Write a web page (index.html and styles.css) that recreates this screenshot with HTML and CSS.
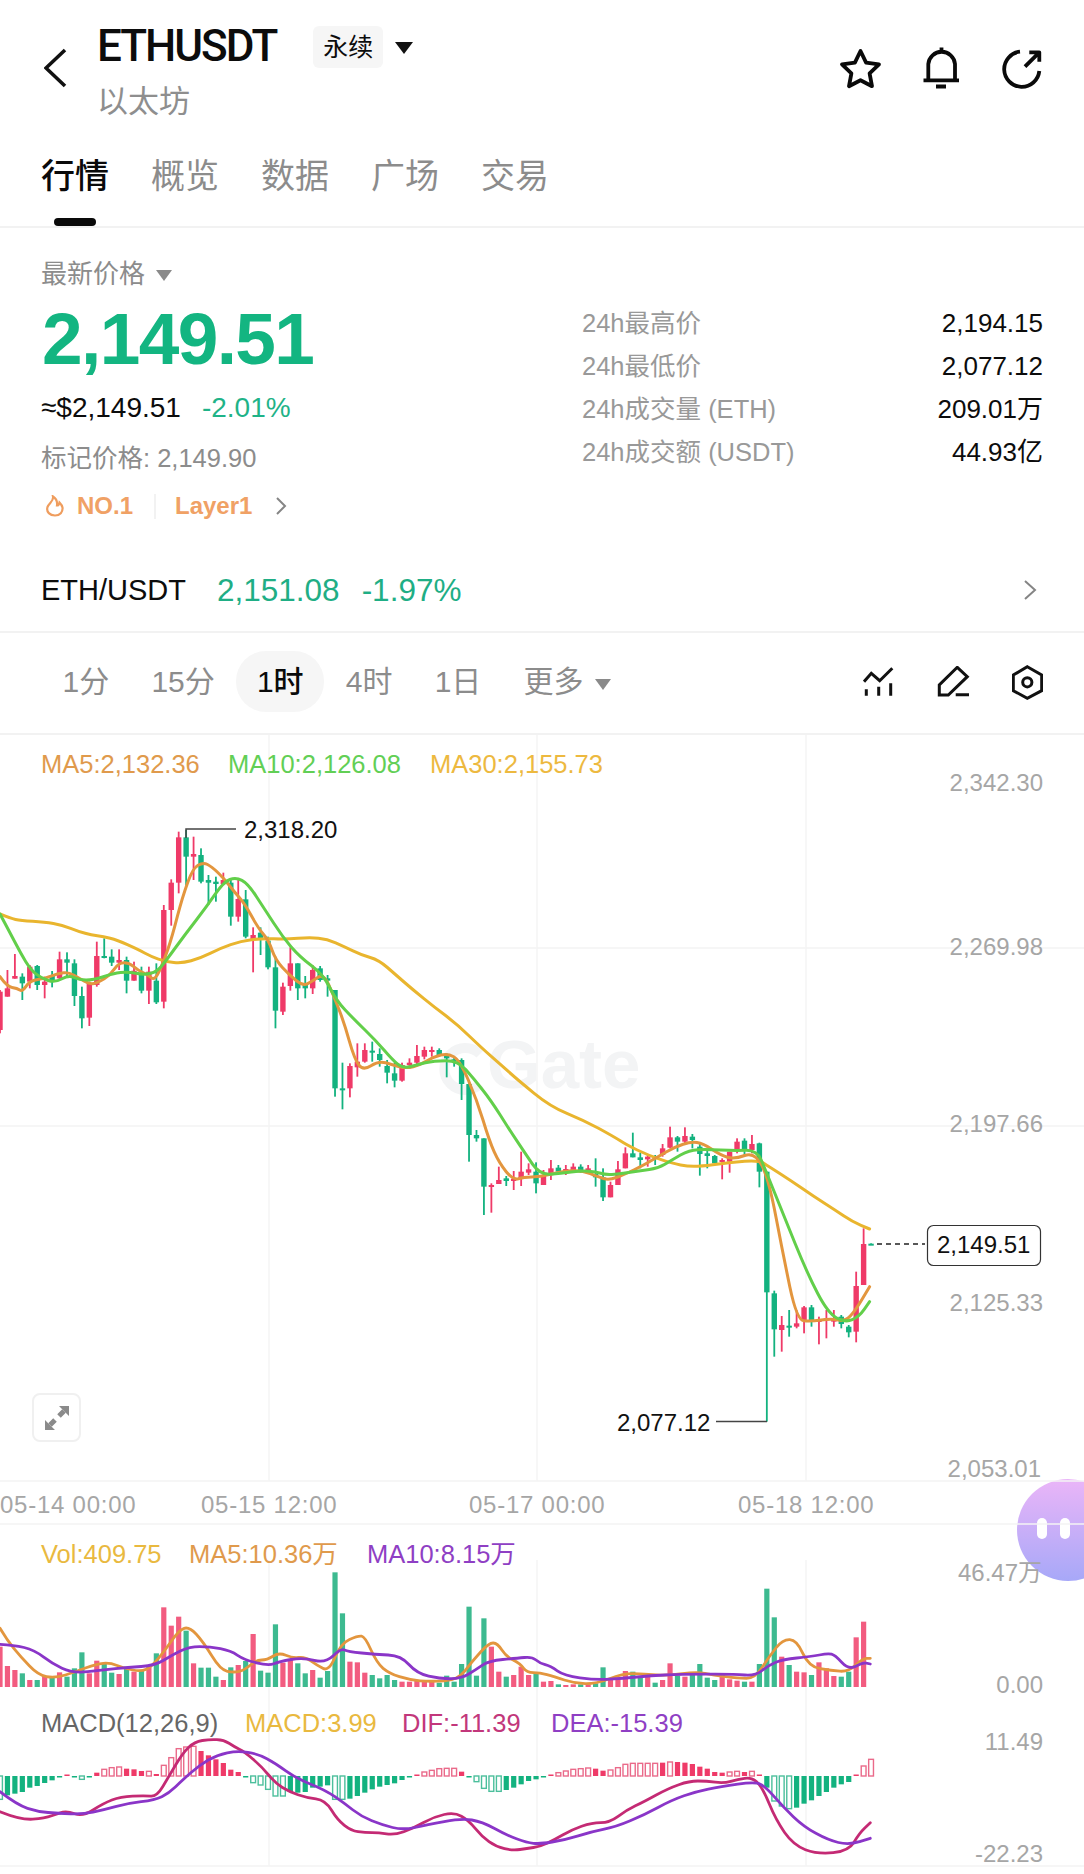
FILE: index.html
```html
<!DOCTYPE html>
<html lang="zh-CN">
<head>
    <meta charset="UTF-8">
    <meta name="viewport" content="width=device-width, initial-scale=1.0">
    <title>ETHUSDT 永续</title>
    <link rel="stylesheet" href="styles.css">
</head>
<body>
<div class="page">

    <header class="topbar">
        <svg class="back-icon" width="24" height="40" viewBox="0 0 24 40"><path d="M21 2 L2 20 L21 38"/></svg>
        <div class="title-block">
            <div class="title-row">
                <span class="symbol">ETHUSDT</span>
                <span class="contract-tag">永续</span>
                <span class="caret caret-dark"></span>
            </div>
            <div class="subtitle">以太坊</div>
        </div>
        <div class="top-actions">
            <svg width="44" height="44" viewBox="0 0 44 44"><path class="line-icon" d="M21.5 4 L27.1 15.6 L40 17.4 L30.6 26.4 L33 39.2 L21.5 33.2 L10 39.2 L12.4 26.4 L3 17.4 L15.9 15.6 Z"/></svg>
            <svg width="37" height="42" viewBox="0 0 37 42"><path class="line-icon" d="M5.3 33 V17 A13.4 13.4 0 0 1 32 17 V33 M0.5 33.3 H36 M18.5 0.5 V4 M13 39.5 H23"/></svg>
            <svg class="share-icon" width="40" height="42" viewBox="0 0 40 42"><path class="line-icon" d="M18 2.7 A17.6 17.6 0 1 0 37.3 22 M23 17.7 L36.3 4.3 M27.3 3.3 H37.3 V12.7"/></svg>
        </div>
    </header>

    <nav class="tabs">
        <div class="tab active">行情<i class="tab-bar"></i></div>
        <div class="tab">概览<i class="tab-bar"></i></div>
        <div class="tab">数据<i class="tab-bar"></i></div>
        <div class="tab">广场<i class="tab-bar"></i></div>
        <div class="tab">交易<i class="tab-bar"></i></div>
    </nav>

    <section class="quote">
        <div class="quote-left">
            <div class="latest-label">最新价格<span class="caret caret-gray"></span></div>
            <div class="big-price">2,149.51</div>
            <div class="usd-line">≈$2,149.51<span class="usd-change">-2.01%</span></div>
            <div class="mark-price">标记价格: 2,149.90</div>
            <div class="tag-line">
                <svg class="flame" width="20" height="22" viewBox="0 0 20 22"><path d="M8 1.5 C9 6 4 8 2.5 12 C1 17 5 20.5 10 20.5 C15 20.5 18 17 17.5 12.5 C17 10 15.5 8.5 14.5 7.5 C14 10 13 10.5 12 10.5 C12.5 7 11 3.5 8 1.5 Z"/></svg>
                <span class="rank">NO.1</span>
                <span class="tag-sep"></span>
                <span class="rank">Layer1</span>
                <svg class="chev chev-tag" width="12" height="18" viewBox="0 0 12 18"><path d="M2 1 L10 9 L2 17"/></svg>
            </div>
        </div>
        <div class="stats">
            <div class="stat-row"><span class="stat-name">24h最高价</span><span class="stat-value">2,194.15</span></div>
            <div class="stat-row"><span class="stat-name">24h最低价</span><span class="stat-value">2,077.12</span></div>
            <div class="stat-row"><span class="stat-name">24h成交量 (ETH)</span><span class="stat-value">209.01万</span></div>
            <div class="stat-row"><span class="stat-name">24h成交额 (USDT)</span><span class="stat-value">44.93亿</span></div>
        </div>
    </section>

    <section class="spot-row">
        <span class="spot-name">ETH/USDT</span>
        <span class="spot-price">2,151.08</span>
        <span class="spot-change">-1.97%</span>
        <svg class="chev chev-spot" width="14" height="20" viewBox="0 0 14 20"><path d="M2 1 L12 10 L2 19"/></svg>
    </section>

    <section class="periods">
        <span class="period">1分</span>
        <span class="period">15分</span>
        <span class="period active">1时</span>
        <span class="period">4时</span>
        <span class="period">1日</span>
        <span class="period">更多<span class="caret caret-gray caret-more"></span></span>
        <div class="chart-tools">
            <svg width="32" height="32" viewBox="0 0 32 32"><path class="tool-icon" d="M1 15.7 L8.3 7.3 L16.7 14.7 L29.3 2.3 M3.3 23.3 V29.7 M15.7 20.7 V29.7 M27.7 17.3 V29.7"/></svg>
            <svg width="33" height="32" viewBox="0 0 33 32"><path class="tool-icon" d="M20.3 1.3 L30.3 10.7 L11.3 29 H2.3 V19 Z M18.7 28.7 H32"/></svg>
            <svg width="31" height="35" viewBox="0 0 31 35"><path class="tool-icon" d="M15.3 1.7 L29.7 10 V25.7 L15.3 33.3 L1.3 25.7 V10 Z"/><circle class="tool-icon" cx="15.3" cy="17.3" r="4.6"/></svg>
        </div>
    </section>

    <section class="chart-wrap">
        <div class="float-bot"><i></i><i></i></div>
        <svg id="chart" class="chart" width="1084" height="1139" viewBox="0 735 1084 1139">
            <g class="grid">
                <path d="M0 948 H1084 M0 1126 H1084 M0 1481 H1084 M0 1524 H1084 M0 1866 H1084"/>
                <path d="M269 735 V1481 M537 735 V1481 M806 735 V1481 M269 1560 V1866 M537 1560 V1866 M806 1560 V1866"/>
            </g>
            <g class="watermark">
                <path d="M480 1054 A21 21 0 1 0 480 1084"/>
                <text x="487" y="1088">Gate</text>
            </g>
            <g id="series"></g>

            <text class="legend ma5" x="41" y="773">MA5:2,132.36</text>
            <text class="legend ma10" x="228" y="773">MA10:2,126.08</text>
            <text class="legend ma30" x="430" y="773">MA30:2,155.73</text>

            <text class="axis" x="1043" y="791">2,342.30</text>
            <text class="axis" x="1043" y="955">2,269.98</text>
            <text class="axis" x="1043" y="1132">2,197.66</text>
            <text class="axis" x="1043" y="1311">2,125.33</text>
            <text class="axis" x="1041" y="1477">2,053.01</text>

            <text class="axis-time" x="0" y="1513">05-14 00:00</text>
            <text class="axis-time" x="201" y="1513">05-15 12:00</text>
            <text class="axis-time" x="469" y="1513">05-17 00:00</text>
            <text class="axis-time" x="738" y="1513">05-18 12:00</text>

            <path class="leader" d="M186 838 V829 H236"/>
            <text class="mark" x="244" y="838">2,318.20</text>
            <path class="leader" d="M716 1421.5 H767"/>
            <text class="mark" x="617" y="1431">2,077.12</text>

            <path class="dash" d="M877 1244 H925"/>
            <rect class="price-box" x="927.5" y="1225.5" width="113" height="40" rx="6"/>
            <text class="mark" x="937" y="1253">2,149.51</text>

            <text class="legend vol" x="41" y="1563">Vol:409.75</text>
            <text class="legend ma5" x="189" y="1563">MA5:10.36万</text>
            <text class="legend purple" x="367" y="1563">MA10:8.15万</text>
            <text class="axis" x="1042" y="1581">46.47万</text>
            <text class="axis" x="1043" y="1693">0.00</text>

            <text class="legend macd-name" x="41" y="1732">MACD(12,26,9)</text>
            <text class="legend vol" x="245" y="1732">MACD:3.99</text>
            <text class="legend dif" x="402" y="1732">DIF:-11.39</text>
            <text class="legend purple" x="551" y="1732">DEA:-15.39</text>
            <text class="axis" x="1043" y="1750">11.49</text>
            <text class="axis" x="1043" y="1862">-22.23</text>
        </svg>
        <div class="expand-btn">
            <svg width="24" height="24" viewBox="0 0 24 24"><path d="M14 0 H24 V10 Z M0 14 L10 24 H0 Z"/><path class="expand-line" d="M5 19 L10 14 M14 10 L19 5"/></svg>
        </div>
    </section>

</div>
<script src="chart.js"></script>
</body>
</html>
```
FILE: styles.css
```css
* {
    box-sizing: border-box;
}

body {
    margin: 0;
    background: #fff;
    color: #0c0c0c;
    font-family: "Liberation Sans", "Noto Sans CJK SC", sans-serif;
}

.page {
    width: 1084px;
    height: 1874px;
    overflow: hidden;
}

/* top bar */
.topbar {
    display: flex;
    height: 140px;
    padding: 24px 42px 0 46px;
}

.back-icon {
    margin: 24px 0 0 -2px;
}

.back-icon path {
    fill: none;
    stroke: #111;
    stroke-width: 3.6;
}

.title-block {
    margin-left: 29px;
}

.title-row {
    display: flex;
    align-items: flex-start;
}

.symbol {
    font-family: Roboto, sans-serif;
    font-size: 44px;
    font-weight: 500;
    line-height: 44px;
    letter-spacing: -2px;
}

.contract-tag {
    width: 70px;
    height: 42px;
    margin: 2px 0 0 37px;
    border-radius: 6px;
    background: #f6f6f6;
    font-size: 25px;
    line-height: 42px;
    text-align: center;
}

.caret {
    display: inline-block;
    width: 0;
    height: 0;
    border-style: solid;
    border-color: transparent;
    border-bottom-width: 0;
}

.caret-dark {
    margin: 18px 0 0 12px;
    border-width: 12px 9px 0;
    border-top-color: #111;
}

.caret-gray {
    margin-left: 11px;
    border-width: 11px 8px 0;
    border-top-color: #8a8a8a;
    vertical-align: 2px;
}

.subtitle {
    margin-top: 16px;
    color: #8e8e8e;
    font-size: 31px;
    line-height: 36px;
}

.top-actions {
    display: flex;
    gap: 40px;
    align-items: flex-start;
    margin: 23px 0 0 auto;
}

.share-icon {
    margin: 2px 0 0 2px;
}

.line-icon {
    fill: none;
    stroke: #0a0a0a;
    stroke-width: 3.8;
    stroke-linejoin: round;
}

/* tabs */
.tabs {
    display: flex;
    gap: 42px;
    margin-top: 14px;
    padding: 0 41px;
    border-bottom: 2px solid #f2f2f2;
    color: #8c8c8c;
    font-size: 34px;
    line-height: 44px;
}

.tab {
    display: flex;
    flex-direction: column;
    align-items: center;
}

.tab.active {
    color: #0a0a0a;
    font-weight: 500;
}

.tab-bar {
    width: 42px;
    height: 8px;
    margin-top: 20px;
    border-radius: 4px;
}

.tab.active .tab-bar {
    background: #0a0a0a;
}

/* quote */
.quote {
    display: flex;
    justify-content: space-between;
    padding: 29px 41px 28px 41px;
}

.latest-label {
    color: #8c8c8c;
    font-size: 26px;
    line-height: 34px;
}

.big-price {
    margin-top: 12px;
    margin-left: 1px;
    color: #13b581;
    font-size: 73px;
    font-weight: 700;
    line-height: 72px;
    letter-spacing: -1.6px;
}

.usd-line {
    margin-top: 17px;
    font-size: 28px;
    line-height: 32px;
}

.usd-change {
    margin-left: 21px;
    color: #1fb388;
}

.mark-price {
    margin-top: 19px;
    color: #8c8c8c;
    font-size: 25.5px;
    line-height: 30px;
}

.tag-line {
    display: flex;
    align-items: center;
    height: 30px;
    margin-top: 18px;
    color: #f0a165;
    font-size: 24px;
}

.flame {
    margin: 0 12px 0 4px;
}

.flame path {
    fill: none;
    stroke: #ef9d5e;
    stroke-width: 2.2;
}

.tag-sep {
    width: 2px;
    height: 25px;
    margin: 0 19px 0 21px;
    background: #f2f2f2;
}

.rank {
    font-weight: 700;
}

.chev {
    display: block;
}

.chev path {
    fill: none;
    stroke: #858585;
    stroke-width: 2;
}

.chev-tag {
    margin-left: 23px;
}

.stats {
    width: 461px;
    padding-top: 45px;
    font-size: 26px;
}

.stat-row {
    display: flex;
    justify-content: space-between;
    align-items: baseline;
    height: 43px;
    line-height: 43px;
}

.stat-name {
    color: #999;
    font-size: 25.5px;
}

/* spot pair row */
.spot-row {
    display: flex;
    align-items: center;
    height: 84px;
    padding: 0 47px 0 41px;
    border-bottom: 2px solid #f2f2f2;
    font-size: 31.5px;
}

.spot-name {
    font-size: 29px;
}

.spot-price {
    margin-left: 31px;
    color: #1fae85;
}

.spot-change {
    margin-left: 22px;
    color: #1fae85;
}

.chev-spot {
    margin-left: auto;
}

/* kline period row */
.periods {
    display: flex;
    gap: 1.2px;
    align-items: center;
    height: 102px;
    padding: 0 41px 4px 42px;
    border-bottom: 2px solid #f2f2f2;
    color: #8c8c8c;
    font-size: 30px;
}

.period {
    padding: 0 20.5px;
    line-height: 61px;
    white-space: nowrap;
}

.period.active {
    border-radius: 30px;
    background: #f6f6f6;
    color: #0a0a0a;
    font-weight: 500;
}

.caret-more {
    margin-left: 11px;
}

.chart-tools {
    display: flex;
    gap: 42px;
    align-items: center;
    margin: 2px 0 0 auto;
}

.tool-icon {
    fill: none;
    stroke: #111;
    stroke-width: 3;
}

/* chart */
.chart-wrap {
    position: relative;
    height: 1139px;
}

.chart {
    display: block;
    position: relative;
    z-index: 1;
    font-family: "Liberation Sans", "Noto Sans CJK SC", sans-serif;
}

.grid path {
    fill: none;
    stroke: #f4f4f4;
    stroke-width: 1.4;
}

.watermark text {
    fill: #f3f4f5;
    font-size: 69px;
    font-weight: 700;
}

.watermark path {
    fill: none;
    stroke: #f3f4f5;
    stroke-width: 10;
}

.legend {
    font-size: 25.5px;
}

.ma5 { fill: #e09a4c; }
.ma10 { fill: #62cf55; }
.ma30 { fill: #edb93f; }
.vol { fill: #e9b93f; }
.purple { fill: #8f3fc4; }
.dif { fill: #c2377b; }
.macd-name { fill: #666; }

.axis {
    fill: #a6a6a6;
    font-size: 24px;
    text-anchor: end;
}

.axis-time {
    fill: #a6a6a6;
    font-size: 24px;
    letter-spacing: 0.75px;
}

.mark {
    fill: #111;
    font-size: 24px;
}

.leader {
    fill: none;
    stroke: #444;
    stroke-width: 1.5;
}

.dash {
    fill: none;
    stroke: #222;
    stroke-width: 1.5;
    stroke-dasharray: 5 4;
}

.price-box {
    fill: #fff;
    stroke: #333;
    stroke-width: 1.2;
}

.expand-btn {
    position: absolute;
    z-index: 2;
    top: 658px;
    left: 32px;
    display: flex;
    justify-content: center;
    align-items: center;
    width: 49px;
    height: 49px;
    border: 2px solid #f0f0f0;
    border-radius: 8px;
    background: #fff;
}

.expand-btn path {
    fill: #8a8a8a;
}

.expand-btn .expand-line {
    fill: none;
    stroke: #8a8a8a;
    stroke-width: 5;
}

.float-bot {
    position: absolute;
    top: 744px;
    left: 1017px;
    display: flex;
    gap: 13px;
    justify-content: flex-start;
    align-items: center;
    width: 102px;
    height: 102px;
    padding: 0 0 4px 20px;
    border-radius: 50%;
    background: linear-gradient(#eab5f8, #a7a8f8);
}

.float-bot i {
    width: 10px;
    height: 21px;
    border-radius: 5px;
    background: #fff;
}
```
FILE: chart.js
```js
const STEP = 7.445;
const RED = "#ef3a68", GREEN = "#13b27f";
const NS = "http://www.w3.org/2000/svg";

// colour, wick top, body top, body bottom, wick bottom (as read off the picture)
const candlesA = [
    "r750,755,870,880", "r690,745,770,770", "r642,708,716,716", "g700,710,730,780", "r675,680,725,745",
    "g675,678,735,750", "r710,725,735,775", "g693,708,722,742", "r635,658,715,718", "g637,658,668,710",
    "g658,670,768,798", "g740,768,835,865", "r725,730,833,858", "r605,648,735,740", "g595,648,652,655",
    "g628,650,668,678", "r628,660,668,690", "g650,660,722,760", "r665,692,722,722", "g680,700,752,760",
    "r680,695,752,792", "g670,722,787,792", "r495,510,785,805", "r418,428,510,557", "r275,292,428,460",
    "g270,292,350,437", "r290,342,350,420", "g325,345,425,430", "g405,420,428,495", "g410,425,432,485",
    "r398,420,432,435", "g420,428,530,557", "r418,477,530,545", "g450,478,590,595", "r562,585,600,697",
    "g562,578,600,645", "g590,602,682,688", "g650,682,812,865", "r728,740,815,825", "r622,670,738,752",
    "g670,670,745,780", "g708,735,745,775", "r675,690,745,762", "g678,685,720,725", "g705,715,722,770",
    "g750,750,1045,1070", "g968,1045,1050,1108", "r970,978,1045,1072", "r910,965,982,1010", "r910,930,965,968",
    "g905,932,938,965", "g925,942,960,980", "g960,978,998,1030", "g968,1000,1022,1042", "r968,975,1022,1025",
    "r955,968,975,985", "r915,948,968,972", "r920,930,950,958", "r920,930,935,950", "g925,930,945,950",
    "g940,945,955,1012", "g950,958,962,980", "g955,960,1032,1080", "g1030,1032,1185,1265"
];
const candlesB = [
    "g90,105,115,125", "g115,115,260,345", "r250,255,260,338", "r200,240,252,252", "g228,235,243,258",
    "r213,236,243,270", "r155,215,235,258", "r190,208,218,225", "g187,215,250,280", "r210,225,255,255",
    "r180,205,220,240", "g195,203,215,222", "r195,207,215,225", "r190,200,210,215", "g193,200,210,218",
    "r195,205,212,222", "g175,222,232,260", "g205,232,292,303", "r245,255,292,292", "r183,208,255,255",
    "r142,160,205,205", "g98,160,172,172", "g158,172,180,205", "r162,170,178,200", "g165,170,175,195",
    "r132,145,165,170", "r80,112,143,145", "g108,112,125,155", "r82,108,125,132", "g102,110,120,145",
    "g130,140,162,227", "g150,160,168,205", "g165,168,190,190", "r175,180,185,238", "r155,155,185,218",
    "r115,125,150,160", "g115,122,150,165", "r105,132,150,160", "g128,130,215,262", "g215,215,577,965",
    "g572,580,688,770", "r648,675,690,755", "g630,677,681,710", "r630,670,680,685", "r618,622,660,700",
    "g615,622,660,680", "r650,660,665,733", "r630,655,660,715", "r630,655,665,680", "g645,650,672,685",
    "g675,680,697,712", "r515,558,695,727", "r385,432,555,555", "g430,431,434,435"
];

const volTops = [
    440,498,510,520,540,540,530,532,517,530,505,457,520,482,490,518,522,500,515,510,495,460,322,377,350,392,490,503,503,530,
    540,502,495,483,402,512,518,373,488,480,490,520,510,533,513,217,340,485,487,518,525,535,525,540,545,545,540,540,542,548,
    527,545,492,320,527,355,440,515,530,525,500,525,520,545,543,553,555,553,553,553,550,502,540,533,513,515,533,522,548,540,
    490,527,530,525,492,533,540,525,538,542,545,545,492,266,352,470,495,515,517,525,487,505,528,530,515,412,365
];

// MACD bars: height above/below the zero line, "h" means hollow
const macd = [
    "-70h",-58,-53,-48,-35,-30,-21,-13,-2,2,0,"-10h",-2,10,"20h","25h","27h",22,20,15,"14h",6,"32h","55h","82h","87h","89h",
    75,62,50,39,19,12,-4,"-20h","-27h","-40h","-60h","-60h",-48,-50,-48,-35,-32,-28,"-70h","-70h",-68,-60,-50,-40,-32,-27,-22,
    -12,-3,2,"12h","17h","22h","23h","23h",13,-3,"-17h","-37h","-46h","-46h",-42,-35,-25,-15,-10,-2,3,"10h","15h","20h","22h",
    "24h",22,16,"18h","25h","35h","38h","38h","38h","38h",40,"42h",42,40,36,28,22,12,10,"12h","14h",12,"14h",3,-35,"-75h","-90h",
    "-98h",-95,-83,-73,-60,-48,-35,-25,-18,2,"30h","50h"
];

// picture scale of each crop the lines were read from
const A = [0, 2.904, 740], C = [540, 2.882, 1100], D = [0, 2.904, 1100], E = [400, 2.292, 740];
const V = [0, 2.904, 1500], W = [540, 2.882, 1500];

function read(scale, list) {
    const out = [];
    for (let i = 0; i < list.length; i += 2) {
        out.push([scale[0] + list[i] / scale[1], scale[2] + list[i + 1] / 3]);
    }
    return out;
}

function line(parts, color, width) {
    let pts = [];
    parts.forEach(p => {
        p.forEach(q => {
            if (!pts.length || q[0] > pts[pts.length - 1][0] + 1) pts.push(q);
        });
    });
    // smooth through the midpoints
    let d = "M" + pts[0][0].toFixed(1) + " " + pts[0][1].toFixed(1);
    for (let i = 1; i < pts.length - 1; i++) {
        const mx = (pts[i][0] + pts[i + 1][0]) / 2, my = (pts[i][1] + pts[i + 1][1]) / 2;
        d += " Q" + pts[i][0].toFixed(1) + " " + pts[i][1].toFixed(1) + " " + mx.toFixed(1) + " " + my.toFixed(1);
    }
    const last = pts[pts.length - 1];
    d += " L" + last[0].toFixed(1) + " " + last[1].toFixed(1);
    add("path", { d: d, fill: "none", stroke: color, "stroke-width": width, "stroke-linecap": "round" });
}

const series = document.getElementById("series");

function add(tag, attrs) {
    const el = document.createElementNS(NS, tag);
    Object.keys(attrs).forEach(k => el.setAttribute(k, attrs[k]));
    series.appendChild(el);
}

// candles
const colors = [];
function drawCandle(str, i, base) {
    const c = str[0] === "r" ? RED : GREEN;
    const v = str.slice(1).split(",").map(n => base + Number(n) / 3);
    const x = i * STEP;
    colors[i] = str[0];
    add("rect", { x: x - 0.9, y: v[0], width: 1.8, height: v[3] - v[0], fill: c });
    add("rect", { x: x - 2.7, y: v[1], width: 5.4, height: Math.max(v[2] - v[1], 2), fill: c });
}
candlesA.forEach((s, i) => drawCandle(s, i, 740));
candlesB.forEach((s, i) => drawCandle(s, i + candlesA.length, 1100));

// volume
volTops.forEach((z, i) => {
    const top = 1500 + z / 3;
    add("rect", {
        x: i * STEP - 2.6, y: top, width: 5.2, height: 1687 - top,
        fill: colors[i] === "r" ? "#f25c80" : "#3dba90"
    });
});

// macd bars
macd.forEach((val, i) => {
    const hollow = typeof val === "string";
    const z = parseFloat(val);
    const h = Math.max(Math.abs(z) / 3, 1.5);
    const y = z > 0 ? 1776 - h : 1776;
    const up = z > 0;
    if (hollow) {
        add("rect", {
            x: i * STEP - 2.4, y: y, width: 4.8, height: h, fill: "#fff",
            stroke: up ? "#ea6a8a" : "#4cbf9c", "stroke-width": 1.4
        });
    } else {
        add("rect", { x: i * STEP - 2.6, y: y, width: 5.2, height: h, fill: up ? RED : GREEN });
    }
});

// moving averages on the price pane
const MA30 = "#e9b52e", MA5 = "#e3963e", MA10 = "#62cf4a", PURPLE = "#8a35c8";

line([read(A, [0,522,30,535,60,542,130,546,180,555,230,575,265,585,300,590,340,600,400,628,440,650,480,665,530,670,580,655,640,625,700,603,760,595,830,598,900,592,950,597,1000,620,1050,645,1100,660,1150,705,1200,750,1260,800,1330,855,1400,925,1450,970]),
      read(E, [130,850,200,940,270,1020,345,1100,420,1140,490,1190]),
      read(C, [150,90,200,118,250,135,310,165,380,190,430,200,480,197,550,187,630,180,660,200,720,240,790,290,850,330,900,365,950,387])], MA30, 3);

line([read(A, [0,710,20,740,50,745,65,755,85,725,110,718,130,715,170,700,200,697,230,715,260,733,285,728,320,705,345,668,375,668,400,690,430,705,450,722,475,665,500,590,530,470,560,385,590,367,615,380,650,415,680,455,710,490,750,565,780,600,800,660,840,705,880,738,905,725,940,700,970,770,1000,850,1030,960,1055,992,1100,962,1140,975,1180,985,1220,975,1260,950,1300,940,1335,960]),
      read(D, [1385,0,1420,120,1450,190,1490,240,1520,232,1568,230]),
      read(C, [60,215,120,210,170,232,200,240,240,225,300,195,340,170,390,140,435,125,470,130,520,165,560,178,620,155,660,240,700,460,740,660,780,665,840,655,880,665,910,630,950,560])], MA5, 3);

line([read(A, [0,522,30,580,60,640,90,690,120,715,160,728,200,705,230,720,270,720,330,700,370,695,420,705,455,695,480,665,540,580,600,500,650,425,685,412,720,430,770,510,820,590,870,650,940,705,975,780,1030,840,1090,900,1140,960,1170,985,1210,975,1260,962,1330,962,1375,1015]),
      read(D, [1425,0,1480,90,1525,160,1568,225]),
      read(C, [60,220,120,212,160,215,190,225,240,220,290,212,340,205,380,180,430,150,480,148,560,152,625,150,650,210,700,340,770,520,830,640,880,668,920,650,950,605])], MA10, 3);

// volume averages
line([read(V, [0,385,20,420,60,470,110,525,160,535,220,515,280,492,320,488,360,505,410,515,440,500,480,450,520,390,550,380,590,425,640,510,680,518,710,510,745,480,775,480,810,457,850,475,885,470,920,495,955,515,990,430,1040,407,1060,410,1095,490,1130,520,1190,540,1250,545,1330,540,1370,485,1420,428,1445,430,1470,470,1510,490,1530,518,1568,518]),
      read(W, [40,530,100,550,160,552,240,520,300,522,370,527,450,515,500,525,570,535,620,535,660,470,700,418,740,420,775,500,840,512,890,515,930,475,952,475])], MA5, 2.8);

line([read(V, [0,433,40,435,100,450,150,490,210,520,300,510,370,502,450,497,500,465,550,440,610,440,670,452,710,480,780,497,810,485,880,472,945,490,990,445,1010,455,1090,463,1165,467,1210,520,1280,537,1340,535,1380,510,1420,482,1500,475,1545,470,1568,490]),
      read(W, [30,498,70,527,160,540,240,535,320,527,400,523,560,522,620,528,660,495,700,478,780,470,830,460,850,465,890,510,930,487,952,492])], PURPLE, 2.8);

// macd lines
line([read(V, [0,935,60,960,130,955,170,940,195,933,240,950,300,910,350,890,420,887,455,890,490,830,530,760,565,725,610,718,650,720,680,740,710,755,760,800,800,850,840,875,890,893,945,900,980,960,1020,992,1060,998,1100,998,1145,1005,1200,985,1260,950,1320,937,1360,960,1400,1010,1440,1040,1490,1052,1530,1045,1568,1040]),
      read(W, [40,1020,90,990,150,968,200,968,250,930,300,905,370,865,430,843,480,843,530,850,570,838,610,832,640,860,680,960,730,1035,800,1063,890,1053,920,1000,952,968])], "#c42a74", 2.8);

line([read(V, [0,875,50,915,110,935,170,940,240,943,300,930,370,910,450,900,490,880,530,840,580,795,630,765,690,752,750,762,800,790,860,835,945,870,1000,910,1050,950,1110,975,1170,990,1240,975,1340,955,1400,965,1470,1005,1530,1028,1568,1032]),
      read(W, [70,1020,150,995,220,980,300,945,380,900,450,875,520,860,620,845,650,860,700,920,760,980,830,1020,890,1035,952,1015])], PURPLE, 2.8);
```
